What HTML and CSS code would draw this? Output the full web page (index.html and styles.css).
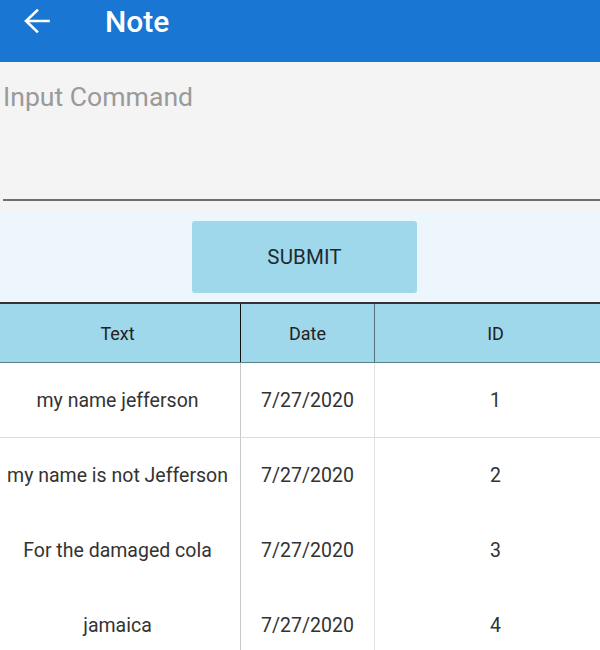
FILE: index.html
```html
<!DOCTYPE html>
<html>
<head>
<meta charset="utf-8">
<link rel="stylesheet" href="styles.css">
</head>
<body>
<header class="appbar">
  <svg class="back" width="36" height="36" viewBox="0 0 36 36"><path d="M30.5 19H8.5M19 8.5L8 19L19 29.5" fill="none" stroke="#fff" stroke-width="2.6" stroke-linecap="square"/></svg>
  <h1 class="title">Note</h1>
</header>
<div class="input-area">
  <div class="placeholder">Input Command</div>
  <div class="underline"></div>
</div>
<div class="submit-area">
  <button class="submit">SUBMIT</button>
</div>
<div class="table">
  <div class="row head">
    <div class="cell c1">Text</div>
    <div class="cell c2">Date</div>
    <div class="cell c3">ID</div>
  </div>
  <div class="row first">
    <div class="cell c1">my name jefferson</div>
    <div class="cell c2">7/27/2020</div>
    <div class="cell c3">1</div>
  </div>
  <div class="row">
    <div class="cell c1">my name is not Jefferson</div>
    <div class="cell c2">7/27/2020</div>
    <div class="cell c3">2</div>
  </div>
  <div class="row">
    <div class="cell c1">For the damaged cola</div>
    <div class="cell c2">7/27/2020</div>
    <div class="cell c3">3</div>
  </div>
  <div class="row">
    <div class="cell c1">jamaica</div>
    <div class="cell c2">7/27/2020</div>
    <div class="cell c3">4</div>
  </div>
</div>
</body>
</html>
```

FILE: styles.css
```css
* { box-sizing: border-box; }
html, body { margin: 0; padding: 0; }
body {
  font-family: Roboto, "Noto Sans", sans-serif;
  background: #fff;
  width: 600px;
  height: 650px;
  overflow: hidden;
}
.appbar {
  height: 62px;
  background: #1976d2;
  display: flex;
  align-items: flex-start;
  padding-top: 2px;
}
.back {
  margin-left: 18px;
}
.title {
  margin: 4px 0 0 51px;
  color: #fff;
  font-size: 30px;
  font-weight: 500;
  line-height: 32px;
}
.input-area {
  height: 150px;
  background: #f4f4f4;
  padding: 19px 0 0 3px;
  display: flex;
  flex-direction: column;
}
.placeholder {
  color: #9a9a9a;
  font-size: 26.6px;
  line-height: 32px;
}
.underline {
  margin-top: 86px;
  height: 1.5px;
  background: #6e6e6e;
}
.submit-area {
  height: 90px;
  background: #eef6fd;
  display: flex;
  justify-content: center;
  padding-top: 9px;
  padding-left: 9px;
}
.submit {
  width: 225px;
  height: 72px;
  background: #9fd8eb;
  border: none;
  border-radius: 3px;
  font-family: Roboto, sans-serif;
  font-size: 20.5px;
  color: #1c2a30;
  letter-spacing: 0.1px;
  padding: 0;
}
.table {
  border-top: 2px solid #333;
}
.row {
  display: flex;
  height: 75px;
}
.row.head {
  height: 59px;
  background: #9fd8eb;
  border-bottom: 1px solid #5b7f8c;
}
.row.first {
  border-bottom: 1px solid #dcdcdc;
}
.cell {
  display: flex;
  align-items: center;
  justify-content: center;
  font-size: 19.5px;
  color: #333;
  white-space: nowrap;
}
.head .cell {
  font-size: 18px;
  color: #222;
}
.c1 { width: 240px; padding-right: 5px; }
.c2 { width: 134px; border-left: 1px solid #c8c8c8; }
.c3 { flex: 1; border-left: 1px solid #e2e2e2; padding-left: 16px; }
.head .c2 { border-left-color: #111; }
.head .c3 { border-left-color: #55707a; }
```
